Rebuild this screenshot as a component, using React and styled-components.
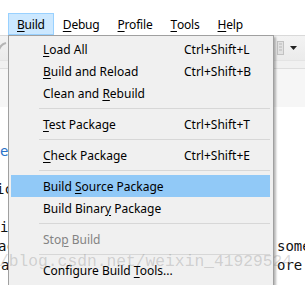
import styled, { createGlobalStyle } from "styled-components";

const Global = createGlobalStyle`
  html, body {
    margin: 0;
    padding: 0;
    background: #ffffff;
    overflow: hidden;
  }
  body {
    font-family: "Noto Sans", "Liberation Sans", sans-serif;
  }
`;

const Screen = styled.div`
  position: relative;
  width: 305px;
  height: 285px;
  overflow: hidden;
  background: #ffffff;
`;

const MenuBar = styled.div`
  display: flex;
  padding: 13px 0 0 8px;
  height: 22px;
  background: #ffffff;
`;

const BarItem = styled.div`
  box-sizing: border-box;
  height: 22px;
  padding: 0 8px;
  display: flex;
  align-items: center;
  font-size: 12px;
  letter-spacing: -0.2px;
  color: #000;
  border: 1px solid ${(p) => (p.$open ? "#99d1ff" : "transparent")};
  background: ${(p) => (p.$open ? "#cce8ff" : "transparent")};
`;

const Key = styled.span`
  text-decoration: underline;
  text-underline-offset: 2px;
`;

const Toolbar = styled.div`
  height: 24px;
  border-top: 1px solid #d9d9d9;
  background: linear-gradient(#f3f3f3, #ebebeb);
  display: flex;
  align-items: center;
  justify-content: space-between;
`;

const ToolGroup = styled.div`
  display: flex;
  align-items: center;
  gap: 6px;
  padding-right: 8px;
`;

const TabBand = styled.div`
  height: 46px;
  background: #f6f6f6;
  border-top: 1px solid #e4e4e4;
  box-shadow: inset 0 7px 0 #f1f1f1, inset 0 8px 0 #dedede;
`;

const Editor = styled.div`
  padding-top: 35px;
  font-family: "DejaVu Sans Mono", "Liberation Mono", monospace;
  font-size: 14px;
  line-height: 19px;
  color: #111;
`;

const EditorLine = styled.div`
  display: grid;
  grid-template-columns: 277px 1fr;
  height: 19px;
  white-space: pre;
`;

const Lead = styled.span`
  margin-left: ${(p) => p.$shift || 0}px;
  color: ${(p) => p.$tone || "#111"};
`;

const Tail = styled.span``;

const Menu = styled.div`
  position: absolute;
  left: 8px;
  top: 35px;
  width: 266px;
  height: 262px;
  box-sizing: border-box;
  padding: 2px 3px 0 2px;
  background: #f0f0f0;
  border: 1px solid #a0a0a0;
  box-shadow: 2px 2px 2px rgba(0, 0, 0, 0.28);
  font-size: 12px;
`;

const Item = styled.div`
  display: grid;
  grid-template-columns: 141px 1fr;
  align-items: center;
  height: 22px;
  padding-left: 32px;
  color: ${(p) => (p.$disabled ? "#838383" : "#000")};
  background: ${(p) => (p.$active ? "#91c9f7" : "transparent")};
`;

const Separator = styled.div`
  height: 9px;
  margin-left: 28px;
  display: flex;
  align-items: center;

  &::after {
    content: "";
    flex: 1;
    height: 1px;
    background: #d7d7d7;
  }
`;

const Watermark = styled.div`
  position: absolute;
  left: -1px;
  top: 252px;
  font-family: "Liberation Mono", monospace;
  font-size: 16.3px;
  color: rgba(128, 128, 128, 0.3);
  white-space: pre;
  pointer-events: none;
`;

const items = [
  { label: ["", "L", "oad All"], keys: "Ctrl+Shift+L" },
  { label: ["", "B", "uild and Reload"], keys: "Ctrl+Shift+B" },
  { label: ["Clean and ", "R", "ebuild"] },
  "sep",
  { label: ["", "T", "est Package"], keys: "Ctrl+Shift+T" },
  "sep",
  { label: ["", "C", "heck Package"], keys: "Ctrl+Shift+E" },
  "sep",
  { label: ["Build ", "S", "ource Package"], active: true },
  { label: ["Build Binar", "y", " Package"] },
  "sep",
  { label: ["Sto", "p", " Build"], disabled: true },
  "sep",
  { label: ["Configure Build ", "T", "ools..."] },
];

function UndoIcon() {
  return (
    <svg width="10" height="14" viewBox="0 0 10 14" style={{ marginLeft: -3 }}>
      <path d="M1 12 C2 6 5 3 9 2" stroke="#b5b5b5" strokeWidth="2.2" fill="none" />
    </svg>
  );
}

function DropIcons() {
  return (
    <ToolGroup>
      <svg width="7" height="16" viewBox="0 0 7 16">
        <rect x="0.5" y="1.5" width="6" height="13" fill="#e2e2e2" stroke="#c2c2c2" />
        <path d="M2 4h3M2 7h3M2 10h3" stroke="#b8b8b8" />
      </svg>
      <svg width="7" height="4" viewBox="0 0 7 4">
        <path d="M0 0h7L3.5 4z" fill="#222" />
      </svg>
    </ToolGroup>
  );
}

export default function App() {
  return (
    <Screen>
      <Global />
      <MenuBar>
        <BarItem $open>
          <Key>B</Key>uild
        </BarItem>
        <BarItem>
          <Key>D</Key>ebug
        </BarItem>
        <BarItem>
          <Key>P</Key>rofile
        </BarItem>
        <BarItem>
          <Key>T</Key>ools
        </BarItem>
        <BarItem>
          <Key>H</Key>elp
        </BarItem>
      </MenuBar>
      <Toolbar>
        <UndoIcon />
        <DropIcons />
      </Toolbar>
      <TabBand />
      <Editor>
        <EditorLine>
          <Lead $tone="#2b73c8">e</Lead>
        </EditorLine>
        <EditorLine />
        <EditorLine>
          <Lead $shift={-4}>ic</Lead>
        </EditorLine>
        <EditorLine />
        <EditorLine>
          <Lead>i</Lead>
        </EditorLine>
        <EditorLine>
          <Lead $shift={-2}>ac</Lead>
          <Tail>some</Tail>
        </EditorLine>
        <EditorLine>
          <Lead $shift={1}>a</Lead>
          <Tail>ore</Tail>
        </EditorLine>
        <EditorLine>
          <Lead />
          <Tail> .</Tail>
        </EditorLine>
      </Editor>
      <Menu>
        {items.map((it, i) =>
          it === "sep" ? (
            <Separator key={i} />
          ) : (
            <Item key={i} $active={it.active} $disabled={it.disabled}>
              <span>
                {it.label[0]}
                <Key>{it.label[1]}</Key>
                {it.label[2]}
              </span>
              <span>{it.keys}</span>
            </Item>
          )
        )}
      </Menu>
      <Watermark>/blog.csdn.net/weixin_41929524</Watermark>
    </Screen>
  );
}
